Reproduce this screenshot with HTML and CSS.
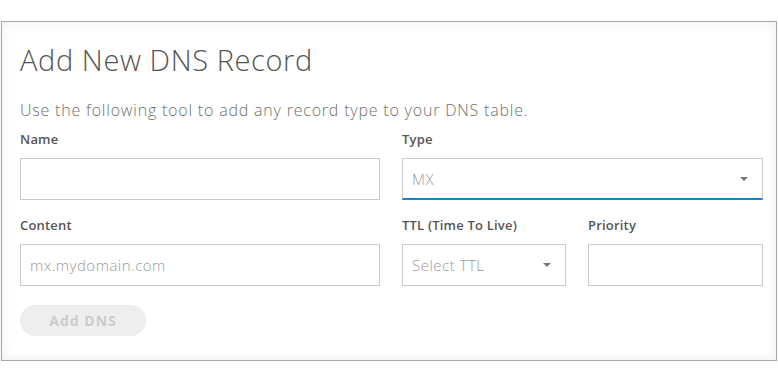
FILE: index.html
```html
<!DOCTYPE html>
<html lang="en">
<head>
    <meta charset="UTF-8">
    <title>Add New DNS Record</title>
    <link rel="stylesheet" href="styles.css">
</head>
<body>
    <div class="page">
        <div class="card">
            <h2>Add New DNS Record</h2>
            <p class="intro">Use the following tool to add any record type to your DNS table.</p>

            <div class="row">
                <div class="field">
                    <label for="name">Name</label>
                    <input type="text" id="name">
                </div>
                <div class="field">
                    <label>Type</label>
                    <div class="select active">
                        <span>MX</span>
                        <i class="caret"></i>
                    </div>
                </div>
            </div>

            <div class="row">
                <div class="field">
                    <label for="content">Content</label>
                    <input type="text" id="content" placeholder="mx.mydomain.com">
                </div>
                <div class="sub-row">
                    <div class="field">
                        <label>TTL (Time To Live)</label>
                        <div class="select">
                            <span>Select TTL</span>
                            <i class="caret"></i>
                        </div>
                    </div>
                    <div class="field">
                        <label for="priority">Priority</label>
                        <input type="text" id="priority">
                    </div>
                </div>
            </div>

            <button class="btn" disabled>Add DNS</button>
        </div>
    </div>
</body>
</html>
```

FILE: styles.css
```css
* {
    box-sizing: border-box;
    margin: 0;
    padding: 0;
}

body {
    font-family: "Open Sans", Arial, sans-serif;
    background: #fff;
    color: #555;
}

.page {
    padding: 21px 1px 0 1px;
}

.card {
    width: 776px;
    height: 340px;
    border: 1px solid #a8a8a8;
    background: #fff;
    padding: 21px 13px 0 18px;
    box-shadow: inset 0 0 12px rgba(0,0,0,0.07), 0 4px 8px rgba(0,0,0,0.08);
}

.card h2 {
    font-size: 29px;
    font-weight: 300;
    line-height: 34px;
    letter-spacing: 0.6px;
    color: #555;
}

.intro {
    margin-top: 21px;
    font-size: 16px;
    font-weight: 300;
    line-height: 24px;
    letter-spacing: 0.8px;
    color: #6f6f6f;
}

.row {
    display: grid;
    grid-template-columns: 360px 361px;
    gap: 22px;
    margin-top: 8px;
}

.row + .row {
    margin-top: 16px;
}

.sub-row {
    display: grid;
    grid-template-columns: 164px 1fr;
    gap: 22px;
}

.field label {
    display: block;
    font-size: 13px;
    font-weight: 600;
    line-height: 18px;
    letter-spacing: 0.2px;
    color: #555;
    margin-bottom: 10px;
}

input, .select {
    width: 100%;
    height: 42px;
    border: 1px solid #cacaca;
    background: #fff;
    font-family: inherit;
    font-size: 15px;
    font-weight: 300;
    letter-spacing: 0.5px;
    color: #999;
    padding: 0 9px;
}

input::placeholder {
    color: #999;
}

.select {
    display: flex;
    align-items: center;
    justify-content: space-between;
    padding-right: 14px;
}

.select.active {
    border-bottom: 2px solid #0a86cf;
}

.caret {
    width: 0;
    height: 0;
    border-left: 4px solid transparent;
    border-right: 4px solid transparent;
    border-top: 4px solid #777;
}

.btn {
    margin-top: 19px;
    width: 126px;
    height: 31px;
    border: none;
    border-radius: 16px;
    background: #eee;
    color: #ccc;
    font-family: inherit;
    font-size: 14px;
    font-weight: 700;
    letter-spacing: 1px;
}
```
